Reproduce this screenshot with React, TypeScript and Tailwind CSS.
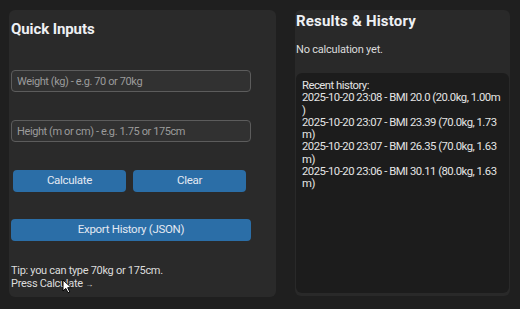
import React from "react";

const history = [
  "2025-10-20 23:08 - BMI 20.0 (20.0kg, 1.00m",
  ")",
  "2025-10-20 23:07 - BMI 23.39 (70.0kg, 1.73",
  "m)",
  "2025-10-20 23:07 - BMI 26.35 (70.0kg, 1.63",
  "m)",
  "2025-10-20 23:06 - BMI 30.11 (80.0kg, 1.63",
  "m)",
];

function Field({ placeholder }: { placeholder: string }) {
  return (
    <input
      placeholder={placeholder}
      className="ml-[1px] block h-[22px] w-[240px] rounded-[4px] border border-[#5c5c5c] bg-[#313131] pl-[5px] text-[11px] tracking-[-0.4px] text-[#e5e5e5] outline-none placeholder:text-[#9b9b9b]"
    />
  );
}

function Btn({ label, className = "" }: { label: string; className?: string }) {
  return (
    <button
      className={`flex h-[22px] items-center justify-center rounded-[4px] bg-[#2b6ea7] text-[11.5px] tracking-[-0.3px] text-[#e3e9f2] ${className}`}
    >
      {label}
    </button>
  );
}

function Cursor() {
  return (
    <svg
      width="11"
      height="15"
      viewBox="0 0 11 15"
      className="pointer-events-none absolute left-[62px] top-[279px]"
    >
      <path
        d="M1 1 L1 12 L3.8 9.4 L6 13.8 L7.8 13 L5.7 8.7 L9.4 8.7 Z"
        fill="#ffffff"
        stroke="#000000"
        strokeWidth="1"
        strokeLinejoin="round"
      />
    </svg>
  );
}

export default function App() {
  return (
    <div
      className="relative flex h-[309px] w-[520px] items-start gap-[19px] bg-[#1f1f1f] pl-[9px] pt-[10px]"
      style={{ fontFamily: "Roboto, 'Noto Sans', sans-serif" }}
    >
      {/* Quick inputs */}
      <div className="flex h-[287px] w-[267px] flex-col rounded-[6px] bg-[#2a2a2a] pl-[1px] pt-[9px]">
        <h2 className="h-[20px] pl-[1px] text-[15px] font-bold leading-[20px] tracking-[-0.1px] text-[#eef0f4]">
          Quick Inputs
        </h2>
        <div className="mt-[31px]">
          <Field placeholder="Weight (kg) - e.g. 70 or 70kg" />
        </div>
        <div className="mt-[28px]">
          <Field placeholder="Height (m or cm) - e.g. 1.75 or 175cm" />
        </div>
        <div className="ml-[3px] mt-[28px] flex gap-[7px]">
          <Btn label="Calculate" className="w-[113px]" />
          <Btn label="Clear" className="w-[113px]" />
        </div>
        <div className="ml-[1px] mt-[27px]">
          <Btn label="Export History (JSON)" className="w-[240px]" />
        </div>
        <div className="ml-[1px] mt-[24px] text-[11px] leading-[12.5px] tracking-[-0.3px] text-[#dcdcdc]">
          <div>Tip: you can type 70kg or 175cm.</div>
          <div>
            Press Calculate <span className="text-[8px]">→</span>
          </div>
        </div>
      </div>

      {/* Results */}
      <div className="flex w-[215px] flex-col rounded-[6px] bg-[#292929] pb-[3px] pt-[1px]">
        <h2 className="h-[20px] pl-[1px] text-[15px] font-bold leading-[20px] tracking-[0.2px] text-[#eef0f4]">
          Results &amp; History
        </h2>
        <p className="mt-[12px] pl-[1px] text-[11px] leading-[14px] tracking-[-0.2px] text-[#dcdcdc]">
          No calculation yet.
        </p>
        <div className="ml-[1px] mt-[16px] h-[220px] w-[213px] rounded-[6px] bg-[#1c1c1c] pl-[6px] pt-[7px] text-[11.3px] leading-[12.25px] tracking-[-0.5px] text-[#e4e4e4]">
          <div>Recent history:</div>
          {history.map((line, i) => (
            <div key={i} className="whitespace-nowrap">
              {line}
            </div>
          ))}
        </div>
      </div>

      <Cursor />
    </div>
  );
}
